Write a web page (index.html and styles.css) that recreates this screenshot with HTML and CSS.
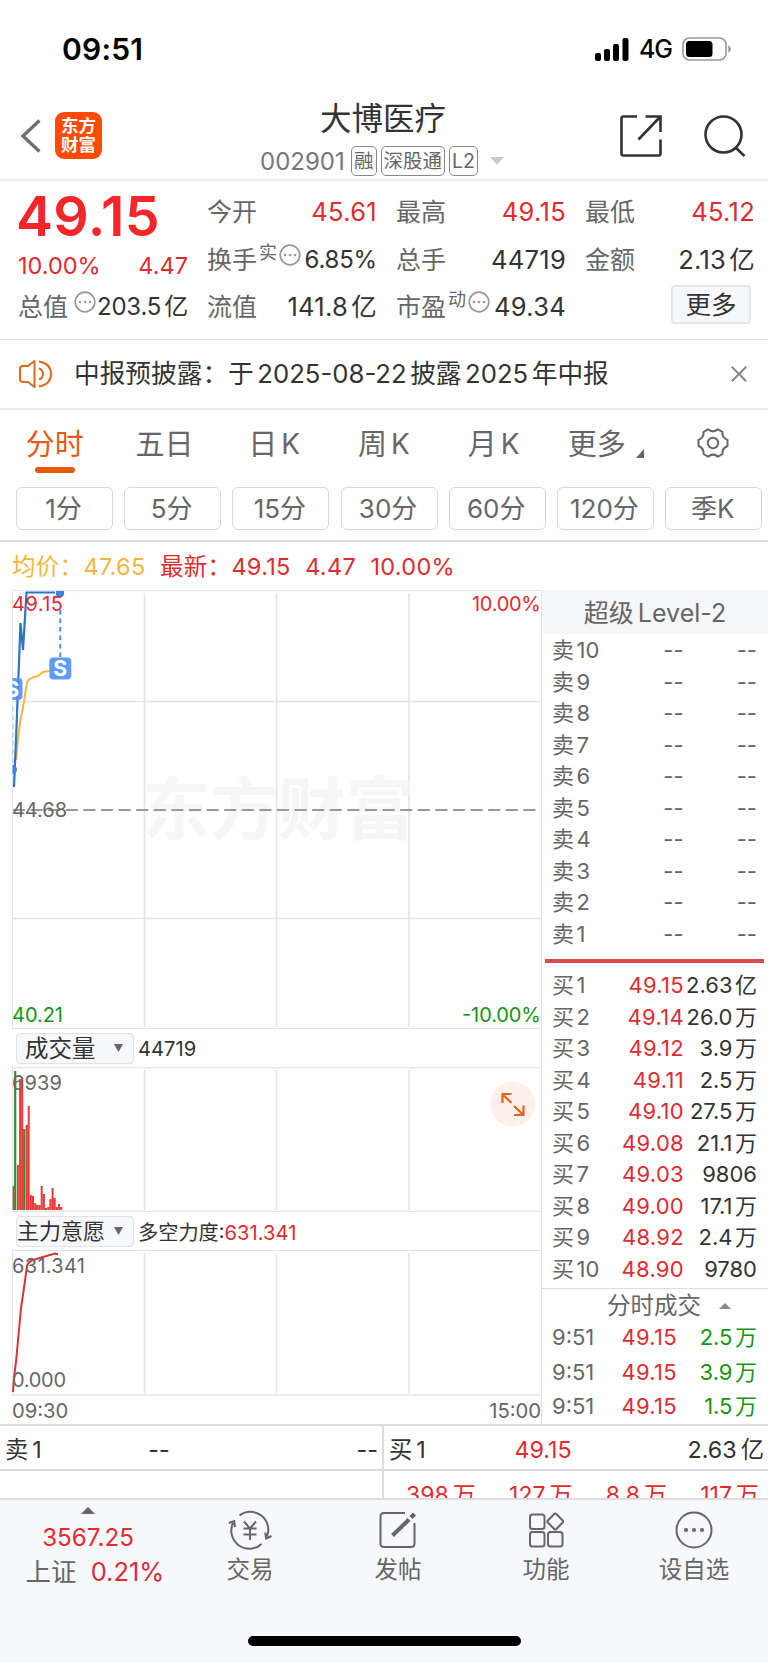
FILE: index.html
```
<!DOCTYPE html>
<html lang="zh-CN">
<head>
    <meta charset="UTF-8">
    <title>大博医疗 002901</title>
    <meta name="viewport" content="width=device-width, initial-scale=1.0">
    <link rel="stylesheet" href="styles.css">
</head>
<body>
    <div class="status-bar">
        <span class="time">09:51</span>
        <svg class="signal" width="34" height="23" viewBox="0 0 34 23">
            <rect x="0" y="15" width="6" height="8" rx="2"/>
            <rect x="9" y="11" width="6" height="12" rx="2"/>
            <rect x="18" y="6" width="6" height="17" rx="2"/>
            <rect x="27.5" y="0" width="6" height="23" rx="2"/>
        </svg>
        <span class="network">4G</span>
        <svg class="battery" width="50" height="24" viewBox="0 0 50 24">
            <rect x="1" y="1" width="43" height="22" rx="6.5" fill="none" stroke="#999" stroke-width="1.6"/>
            <rect x="4" y="4" width="26.5" height="16" rx="3.5"/>
            <path d="M46.3 8.3q2.6 1 2.6 3.7t-2.6 3.7z" fill="#999"/>
        </svg>
    </div>

    <header class="header">
        <svg class="back" width="20" height="34" viewBox="0 0 20 34"><path d="M18.500 1.500 2 17l16.500 15.500" fill="none" stroke="#707070" stroke-width="3.400"/></svg>
        <div class="logo">东方<br>财富</div>
        <div class="title">
            <h1>大博医疗</h1>
            <div class="code">
                <span class="num">002901</span>
                <span class="tag">融</span>
                <span class="tag">深股通</span>
                <span class="tag">L2</span>
                <svg class="caret" width="14" height="8" viewBox="0 0 14 8"><path d="M0 0h14L7 8z" fill="#ccc"/></svg>
            </div>
        </div>
        <svg class="share" width="42" height="42" viewBox="0 0 42 42" fill="none" stroke="#333" stroke-width="2.600">
            <path d="M17 1.500H3.500q-2 0-2 2v35q0 2 2 2h35q2 0 2-2V24.500"/>
            <path d="M25.500 1.500h15V17M40 2 18.500 24.500"/>
        </svg>
        <svg class="search" width="44" height="42" viewBox="0 0 44 42" fill="none" stroke="#333" stroke-width="2.600">
            <circle cx="20.500" cy="19.500" r="18"/>
            <path d="M32.500 32.500 41.500 41"/>
        </svg>
    </header>

    <section class="quote">
        <div class="price-col">
            <div class="price">49.15</div>
            <div class="cell change"><span>10.00%</span><span>4.47</span></div>
            <div class="cell">
                <label>总值</label>
                <svg class="dots dots-gap" viewBox="0 0 22 22"><circle cx="11" cy="11" r="9.800"/><path d="M6 11h.01M11 11h.01M16 11h.01"/></svg>
                <b class="tight">203.5<i>亿</i></b>
            </div>
        </div>
        <div class="col">
            <div class="cell"><label>今开</label><b class="red">45.61</b></div>
            <div class="cell">
                <label>换手<sup>实</sup></label>
                <svg class="dots" viewBox="0 0 22 22"><circle cx="11" cy="11" r="9.800"/><path d="M6 11h.01M11 11h.01M16 11h.01"/></svg>
                <b class="tight">6.85%</b>
            </div>
            <div class="cell"><label>流值</label><b>141.8<i>亿</i></b></div>
        </div>
        <div class="col">
            <div class="cell"><label>最高</label><b class="red">49.15</b></div>
            <div class="cell"><label>总手</label><b>44719</b></div>
            <div class="cell">
                <label>市盈<sup>动</sup></label>
                <svg class="dots" viewBox="0 0 22 22"><circle cx="11" cy="11" r="9.800"/><path d="M6 11h.01M11 11h.01M16 11h.01"/></svg>
                <b>49.34</b>
            </div>
        </div>
        <div class="col">
            <div class="cell"><label>最低</label><b class="red">45.12</b></div>
            <div class="cell"><label>金额</label><b>2.13<i>亿</i></b></div>
            <button class="more">更多</button>
        </div>
    </section>

    <div class="notice">
        <svg width="34" height="28" viewBox="0 0 34 28" fill="none" stroke="#e0691c" stroke-width="2" stroke-linejoin="round">
            <path d="M15.500 1v26L9 22H4q-3 0-3-3V9q0-3 3-3h5z"/>
            <path d="M20 8.500q4 1.500 4 5.500t-4 5.500M20 1.500q12 2 12 12.500T20 26.500"/>
        </svg>
        <p>中报预披露：于<i>2025-08-22</i>披露<i>2025</i>年中报</p>
        <svg class="close" width="16" height="16" viewBox="0 0 16 16"><path d="M.8.8l14.400 14.400M15.200.8.8 15.200" stroke="#888" stroke-width="2"/></svg>
    </div>

    <nav class="tabs">
        <a class="active">分时</a>
        <a>五日</a>
        <a>日<i>K</i></a>
        <a>周<i>K</i></a>
        <a>月<i>K</i></a>
        <a class="tab-more">更多<svg width="8" height="9" viewBox="0 0 8 9"><path d="M8 0v9H0z" fill="#666"/></svg></a>
        <a>
            <svg width="32" height="30" viewBox="0 0 32 30" fill="none" stroke="#666" stroke-width="2" stroke-linejoin="round">
                <path d="M11 1.300Q16 5.500 21 1.300L25.500 4Q24.800 9.500 30.500 12V18Q24.800 20.500 25.500 26L21 28.700Q16 24.500 11 28.700L6.500 26Q7.200 20.500 1.500 18V12Q7.200 9.500 6.500 4Z"/>
                <circle cx="16" cy="15" r="5.200"/>
            </svg>
        </a>
    </nav>
    <div class="periods">
        <button>1分</button>
        <button>5分</button>
        <button>15分</button>
        <button>30分</button>
        <button>60分</button>
        <button>120分</button>
        <button>季K</button>
    </div>

    <div class="summary">
        <span class="avg">均价：<i>47.65</i></span>
        <span class="red">最新：<i>49.15</i></span>
        <span class="red">4.47</span>
        <span class="red">10.00%</span>
    </div>

    <main class="board">
        <div class="charts">
            <!-- price -->
            <svg class="chart" width="541" height="439" viewBox="0 0 541 439">
                <g class="grid">
                    <path d="M12.500 439V.5H541M12 438.500h529"/>
                    <path class="thick" d="M144.500 3v434M276.500 3v434M409 3v434M12 111.500h529M12 328.500h529"/>
                </g>
                <text class="watermark" x="142" y="244" textLength="272">东方财富</text>
                <path d="M13 220h528" stroke="#999" stroke-width="2" stroke-dasharray="12 5.600" fill="none"/>
                <path d="M16 170 19 140 21 127 24 112 27 92Q29 88 38 86L43 82 49 81 55 77" fill="none" stroke="#f5b63c" stroke-width="2"/>
                <path d="M60.300 20v52" stroke="#4a8ef0" stroke-width="2" stroke-dasharray="4.500 4"/>
                <path d="M13 117v56" stroke="#a9c8f7" stroke-width="1.200" stroke-dasharray="4.500 4"/>
                <path d="M14 197 16 150 20.500 33 23 60 26.500 2.500H55" fill="none" stroke="#2f74c0" stroke-width="2.200"/>
                <path d="M12.500 88h6q4 0 4 4v14q0 4-4 4h-6z" fill="#4a90fa" fill-opacity=".88"/>
                <text class="sell-mark" x="5.500" y="107">S</text>
                <path d="M12.500 175a4 4 0 0 1 0 9zM56 1h8v4q-4 6-8 0z" fill="#3a83e8"/>
                <rect x="49.300" y="67.500" width="22" height="22" rx="4" fill="#5c9dff"/>
                <text class="sell-mark" x="53.200" y="86">S</text>
                <rect x="0" y="80" width="12" height="34" fill="#fff"/>
                <text x="12" y="20.500" class="up" textLength="51">49.15</text>
                <text x="541" y="20.500" class="up end" textLength="69">10.00%</text>
                <text x="12" y="226.500" textLength="55">44.68</text>
                <text x="12" y="432" class="down" textLength="51">40.21</text>
                <text x="541" y="432" class="down end" textLength="79">-10.00%</text>
            </svg>
            <div class="indicator">
                <button class="select">成交量<svg width="9" height="8" viewBox="0 0 9 8"><path d="M0 0h9L4.500 8z" fill="#666"/></svg></button>
                <span>44719</span>
            </div>
            <!-- volume -->
            <svg class="chart" width="541" height="145" viewBox="0 0 541 145">
                <g class="grid">
                    <path d="M12.500 145V.5"/>
                    <path class="thick" d="M12 .5h529M12 144.500h529M144.500 3v140M276.500 3v140M409 3v140"/>
                </g>
                <path d="M13.600 143v-24M17.900 143v-45M20.100 143v-131M22.200 143v-132M26.600 143v-85M28.700 143v-104M30.900 143v-15M33 143v-14M35.200 143v-7M37.300 143v-5M39.500 143v-5M41.700 143v-24M43.900 143v-16M46 143v-2M48.200 143v-3M50.400 143v-11M52.600 143v-22M54.700 143v-12M56.900 143v-3M59.100 143v-6M61.200 143v-3" stroke="#ea3a3a" stroke-width="2"/>
                <path d="M15.200 143v-139M24.200 143v-81" stroke="#28962c" stroke-width="2.200"/>
                <text x="12" y="22.500" textLength="50">6939</text>
                <circle cx="512.500" cy="37" r="22.500" fill="#fdf0ea"/>
                <path d="M502.500 36v-9h9M503 27.500l8.500 8.500M523.500 38.500v9.500h-9.500M523 47.500l-9-8.500" fill="none" stroke="#e0641c" stroke-width="2.200"/>
            </svg>
            <div class="indicator">
                <button class="select narrow">主力意愿<svg width="9" height="8" viewBox="0 0 9 8"><path d="M0 0h9L4.500 8z" fill="#666"/></svg></button>
                <span>多空力度:<em>631.341</em></span>
            </div>
            <!-- main force -->
            <svg class="chart" width="541" height="146" viewBox="0 0 541 146">
                <g class="grid">
                    <path d="M12.500 146V.5H541"/>
                    <path class="thick" d="M12 145h529M144.500 3v140M276.500 3v140M409 3v140"/>
                </g>
                <path d="M13 142Q14 125 16 112L21 58 24 38 27 16Q28 12 33 10L43 7 55 3.500 58 4.500" fill="none" stroke="#dc3236" stroke-width="2"/>
                <text x="12" y="22.500" textLength="73">631.341</text>
                <text x="12" y="136.500" textLength="54">0.000</text>
            </svg>
            <div class="hours"><span>09:30</span><span>15:00</span></div>
        </div>

        <aside class="depth">
            <h2>超级<i>Level-2</i></h2>
            <div class="orders">
                <div><span>卖<i>10</i></span><b>--</b><em>--</em></div>
                <div><span>卖<i>9</i></span><b>--</b><em>--</em></div>
                <div><span>卖<i>8</i></span><b>--</b><em>--</em></div>
                <div><span>卖<i>7</i></span><b>--</b><em>--</em></div>
                <div><span>卖<i>6</i></span><b>--</b><em>--</em></div>
                <div><span>卖<i>5</i></span><b>--</b><em>--</em></div>
                <div><span>卖<i>4</i></span><b>--</b><em>--</em></div>
                <div><span>卖<i>3</i></span><b>--</b><em>--</em></div>
                <div><span>卖<i>2</i></span><b>--</b><em>--</em></div>
                <div><span>卖<i>1</i></span><b>--</b><em>--</em></div>
            </div>
            <div class="divider"></div>
            <div class="orders buy">
                <div><span>买<i>1</i></span><b>49.15</b><em>2.63<i>亿</i></em></div>
                <div><span>买<i>2</i></span><b>49.14</b><em>26.0<i>万</i></em></div>
                <div><span>买<i>3</i></span><b>49.12</b><em>3.9<i>万</i></em></div>
                <div><span>买<i>4</i></span><b>49.11</b><em>2.5<i>万</i></em></div>
                <div><span>买<i>5</i></span><b>49.10</b><em>27.5<i>万</i></em></div>
                <div><span>买<i>6</i></span><b>49.08</b><em>21.1<i>万</i></em></div>
                <div><span>买<i>7</i></span><b>49.03</b><em>9806</em></div>
                <div><span>买<i>8</i></span><b>49.00</b><em>17.1<i>万</i></em></div>
                <div><span>买<i>9</i></span><b>48.92</b><em>2.4<i>万</i></em></div>
                <div><span>买<i>10</i></span><b>48.90</b><em>9780</em></div>
            </div>
            <h3>分时成交<svg width="12" height="6" viewBox="0 0 12 6"><path d="M0 6h12L6 0z" fill="#888"/></svg></h3>
            <div class="orders trades">
                <div><span>9:51</span><b>49.15</b><em>2.5<i>万</i></em></div>
                <div><span>9:51</span><b>49.15</b><em>3.9<i>万</i></em></div>
                <div><span>9:51</span><b>49.15</b><em>1.5<i>万</i></em></div>
            </div>
        </aside>
    </main>

    <section class="best">
        <div class="side"><span>卖<i>1</i></span><b>--</b><em>--</em></div>
        <div class="side"><span>买<i>1</i></span><b class="red">49.15</b><em>2.63<i>亿</i></em></div>
        <div class="queue"></div>
        <div class="queue"><span>398<i>万</i></span><span>127<i>万</i></span><span>8.8<i>万</i></span><span>117<i>万</i></span></div>
    </section>

    <footer class="bottom">
        <div class="index">
            <svg width="14" height="7" viewBox="0 0 14 7"><path d="M0 7h14L7 0z" fill="#666"/></svg>
            <b>3567.25</b>
            <span>上证<b>0.21%</b></span>
        </div>
        <a>
            <svg width="44" height="40" viewBox="0 0 44 40" fill="none" stroke="#666" stroke-width="2">
                <path d="M11.500 5.400A18 18 0 0 1 39 26.500M33.500 33.900A18 18 0 0 1 5 13M.8 13l5.400-2 .800 6M43.500 26l-5.400 2.500-.800-6"/>
                <path d="M16 11.500l6 7 6-7M15.500 18.500h13M15.500 24.500h13M22 18.500v11.500"/>
            </svg>
            交易
        </a>
        <a>
            <svg width="38" height="40" viewBox="0 0 38 40" fill="none" stroke="#666" stroke-width="2">
                <path d="M26 3H5Q1.500 3 1.500 6.500v27Q1.500 37 5 37h27q3.500 0 3.500-3.500V13"/>
                <path d="M13.500 25.500 30 9.500" stroke-width="4"/>
                <path d="M32 7.500 35.500 4" stroke-width="4.500"/>
            </svg>
            发帖
        </a>
        <a>
            <svg width="36" height="40" viewBox="0 0 36 40" fill="none" stroke="#666" stroke-width="2">
                <rect x="2" y="4.500" width="14.500" height="14.500" rx="2.500"/>
                <rect x="2" y="22" width="14.500" height="14.500" rx="2.500"/>
                <rect x="20" y="22" width="14.500" height="14.500" rx="2.500"/>
                <rect x="21.300" y="5.500" width="12" height="12" rx="1.500" transform="rotate(45 27.300 11.500)"/>
            </svg>
            功能
        </a>
        <a>
            <svg width="38" height="40" viewBox="0 0 38 40" fill="none" stroke="#666" stroke-width="2">
                <circle cx="19" cy="20" r="17.500"/>
                <path d="M11 20h.01M19 20h.01M27 20h.01" stroke-width="4.200" stroke-linecap="round"/>
            </svg>
            设自选
        </a>
        <div class="home-bar"></div>
    </footer>
</body>
</html>
```
FILE: styles.css
```
* {
    box-sizing: border-box;
}
body {
    margin: 0;
    width: 768px;
    height: 1663px;
    overflow: hidden;
    background: #fff;
    color: #333;
    font-family: Inter, "Noto Sans CJK SC", sans-serif;
    font-size: 24px;
    font-weight: 400;
}
h1, h2, h3, p {
    margin: 0;
    font-weight: 400;
}
b, i, em {
    font-weight: inherit;
    font-style: normal;
}
svg {
    display: block;
    flex: none;
}
button {
    font-family: inherit;
    font-weight: 400;
    padding: 0;
    color: #333;
}
.red {
    color: #e02c30 !important;
}

/* status bar */
.status-bar {
    display: flex;
    align-items: center;
    height: 92px;
    padding: 6px 36px 0 62px;
    color: #000;
}
.time {
    font-size: 30px;
    font-weight: 600;
    letter-spacing: .2px;
    margin-right: auto;
}
.network {
    font-size: 25px;
    font-weight: 500;
    letter-spacing: -1px;
    margin: 0 10px 0 10px;
}

/* header */
.header {
    display: flex;
    height: 89px;
    padding: 0 21px 0 21px;
    border-bottom: 2px solid #eee;
}
.back {
    margin-top: 27px;
}
.logo {
    width: 47px;
    height: 47px;
    margin: 20px 0 0 14px;
    padding-top: 5px;
    border-radius: 9px;
    background: #fd4a05;
    color: #fff;
    font-size: 17.500px;
    font-weight: 700;
    line-height: 18.500px;
    text-align: center;
}
.title {
    width: 300px;
    margin-left: 131px;
}
.title h1 {
    margin-top: 6px;
    padding-left: 87px;
    font-size: 31.500px;
    line-height: 42px;
}
.code {
    display: flex;
    align-items: center;
    height: 30px;
    margin-top: 6px;
    padding-left: 27px;
    color: #777;
}
.num {
    width: 91px;
    font-size: 24px;
}
.tag {
    height: 30px;
    margin-right: 4px;
    padding: 0 2px;
    border: 1.500px solid #888;
    border-radius: 5px;
    font-size: 19.500px;
    line-height: 28px;
    color: #666;
}
.caret {
    margin-left: 8px;
}
.share {
    margin: 23px 0 0 87px;
}
.search {
    margin: 23px 0 0 auto;
}

/* quote */
.quote {
    display: grid;
    grid-template-columns: repeat(4, 170px);
    gap: 19px;
    height: 159px;
    padding: 7px 0 0 18px;
    border-bottom: 1.500px solid #e4e4e6;
}
.cell {
    display: flex;
    height: 47.500px;
    line-height: 48px;
    font-size: 25px;
    white-space: nowrap;
}
.cell b {
    margin-left: auto;
    font-size: 25.500px;
    letter-spacing: .3px;
}
.cell b.tight {
    font-size: 24px;
    letter-spacing: -.2px;
}
.cell b i {
    margin-left: 3px;
}
.cell label {
    color: #666;
}
.cell sup {
    font-size: 18px;
    line-height: 1;
    vertical-align: 10px;
    margin-left: 2px;
}
.price {
    height: 54px;
    margin-left: -2px;
    font-size: 55.500px;
    font-weight: 600;
    line-height: 56px;
    letter-spacing: .4px;
    color: #f5262a;
}
.change {
    height: 41px;
    line-height: 48px;
    font-size: 23.500px;
    justify-content: space-between;
    color: #e02c30;
}
.dots {
    width: 22px;
    height: 22px;
    margin: 8px 0 0 2px;
    fill: none;
    stroke: #999;
    stroke-width: 1.700;
}
.dots path {
    stroke-width: 2.600;
    stroke-linecap: round;
}
.dots-gap {
    margin-left: 6px;
}
.more {
    display: block;
    width: 80px;
    height: 39px;
    margin: 2px 0 0 86px;
    border: 2px solid #e3e5ec;
    border-radius: 4px;
    background: #f7f8fc;
    font-size: 25.500px;
    line-height: 34px;
}

/* notice */
.notice {
    display: flex;
    align-items: center;
    height: 70px;
    padding: 0 21px 0 19px;
    border-bottom: 2px solid #ececee;
}
.notice p {
    margin: -6px 0 0 21px;
    font-size: 25.700px;
}
.notice i {
    margin: 0 3.500px;
}
.close {
    margin-left: auto;
}

/* tabs */
.tabs {
    display: grid;
    grid-template-columns: repeat(7, 109.700px);
    height: 77px;
    line-height: 69px;
    font-size: 29px;
    color: #666;
}
.tabs a {
    display: flex;
    justify-content: center;
}
.tabs a > svg {
    margin-top: 18px;
}
.tabs i {
    margin-left: 4px;
    font-size: 28px;
}
.tabs .active {
    position: relative;
    color: #e65a10;
}
.active::after {
    content: "";
    position: absolute;
    left: 35px;
    top: 57px;
    width: 40px;
    height: 6px;
    border-radius: 3px;
    background: #e65a10;
}
.tabs .tab-more {
    padding-left: 5px;
}
.tabs .tab-more svg {
    margin: 39px 0 0 10px;
}
.periods {
    display: grid;
    grid-template-columns: repeat(7, 97px);
    column-gap: 11.200px;
    height: 55px;
    padding-left: 16px;
    border-bottom: 2px solid #dcdcde;
}
.periods button {
    height: 43px;
    padding-right: 2px;
    border: 1.500px solid #d8d8da;
    border-radius: 6px;
    background: #fff;
    color: #666;
    font-size: 26px;
    line-height: 38px;
}
.summary {
    display: flex;
    gap: 14.500px;
    height: 48px;
    padding-left: 12px;
    line-height: 49px;
    font-size: 23.500px;
    letter-spacing: .3px;
}
.avg {
    color: #f5b63c;
}

/* charts and order book */
.board {
    display: flex;
    height: 836px;
    border-bottom: 2px solid #dcdce4;
}
.charts {
    width: 541px;
}
.chart text {
    font-size: 20px;
    fill: #666;
}
.chart .up {
    fill: #e02c30;
}
.chart .down {
    fill: #149614;
}
.chart .end {
    text-anchor: end;
}
.chart .watermark {
    font-size: 68px;
    font-weight: 700;
    fill: #f6f6f7;
}
.chart .sell-mark {
    font-size: 21px;
    font-weight: 700;
    fill: #fff;
}
.grid path {
    fill: none;
    stroke: #e4e5ea;
    stroke-width: 1;
}
.grid .thick {
    stroke-width: 1.700;
}
.indicator {
    display: flex;
    align-items: center;
    gap: 4px;
    height: 38px;
    padding-left: 16px;
    font-size: 20.200px;
}
.indicator em {
    color: #e02c30;
}
.select {
    display: flex;
    align-items: center;
    justify-content: space-between;
    width: 118px;
    height: 31px;
    padding: 0 10px 0 8px;
    border: 1.500px solid #e0e2ea;
    border-radius: 4px;
    background: #f7f8fc;
    font-size: 23.500px;
    line-height: 27px;
    white-space: nowrap;
}
.select.narrow {
    padding-left: 0;
    font-size: 22px;
}
.hours {
    display: flex;
    justify-content: space-between;
    padding-left: 12px;
    line-height: 30px;
    font-size: 20.200px;
    color: #666;
}
.depth {
    width: 227px;
    border-left: 1.500px solid #e4e5ea;
}
.depth h2 {
    height: 44px;
    background: #f5f6fa;
    color: #666;
    font-size: 25px;
    line-height: 46px;
    text-align: center;
}
.depth h2 i {
    margin-left: 4px;
}
.orders div {
    display: grid;
    grid-template-columns: 50px 82px 73px;
    height: 31.500px;
    padding-left: 10px;
    line-height: 32px;
    font-size: 22px;
    color: #666;
    white-space: nowrap;
}
.orders b, .orders em {
    text-align: right;
}
.orders b {
    letter-spacing: .3px;
}
.orders i {
    margin-left: 2.500px;
}
.divider {
    width: 219px;
    height: 4px;
    margin: 10px 0 6px 3px;
    background: #dc4a4e;
}
.buy b, .trades b {
    color: #e02c30;
}
.buy em {
    color: #333;
}
.depth h3 {
    display: flex;
    align-items: center;
    gap: 18px;
    height: 34px;
    margin-top: 4px;
    padding-left: 65px;
    border-top: 1.500px solid #dcdce4;
    color: #666;
    font-size: 23.500px;
    line-height: 32px;
}
.trades div {
    grid-template-columns: 50px 75px 80px;
    height: 34.700px;
    line-height: 31px;
}
.trades em {
    color: #149614;
}

/* best bid and ask */
.best {
    display: grid;
    grid-template-columns: 382px 386px;
    grid-template-rows: 45px 27px;
    height: 72px;
    overflow: hidden;
}
.side {
    display: grid;
    grid-template-columns: 84px 140px 1fr;
    padding: 0 4px 0 5px;
    border-bottom: 2px solid #dcdce4;
    font-size: 23.300px;
    line-height: 48px;
}
.side b {
    text-align: center;
}
.side em {
    text-align: right;
}
.best i {
    margin-left: 4px;
}
.side:nth-child(even), .queue:nth-child(even) {
    border-left: 2px solid #dcdce4;
}
.queue {
    display: flex;
    justify-content: space-between;
    padding: 0 9px 0 22px;
    line-height: 48px;
    font-size: 23px;
    color: #e02c30;
}

/* bottom bar */
.bottom {
    position: relative;
    display: grid;
    grid-template-columns: 176px repeat(4, 148px);
    height: 166px;
    border-top: 2px solid #dcdce4;
    background: #f7f8fb;
}
.bottom a {
    display: flex;
    flex-direction: column;
    align-items: center;
    padding-top: 10px;
    font-size: 23.500px;
    line-height: 40px;
    color: #666;
}
.index {
    display: flex;
    flex-direction: column;
    align-items: center;
    padding-top: 7px;
    font-size: 24.200px;
    line-height: 34px;
    color: #666;
}
.index b {
    margin-top: 7px;
    color: #e02c30;
}
.index span {
    padding-left: 14px;
    font-size: 25.500px;
}
.index span b {
    margin-left: 14px;
}
.home-bar {
    position: absolute;
    left: 248px;
    top: 136px;
    width: 273px;
    height: 10px;
    border-radius: 5px;
    background: #000;
}
```
